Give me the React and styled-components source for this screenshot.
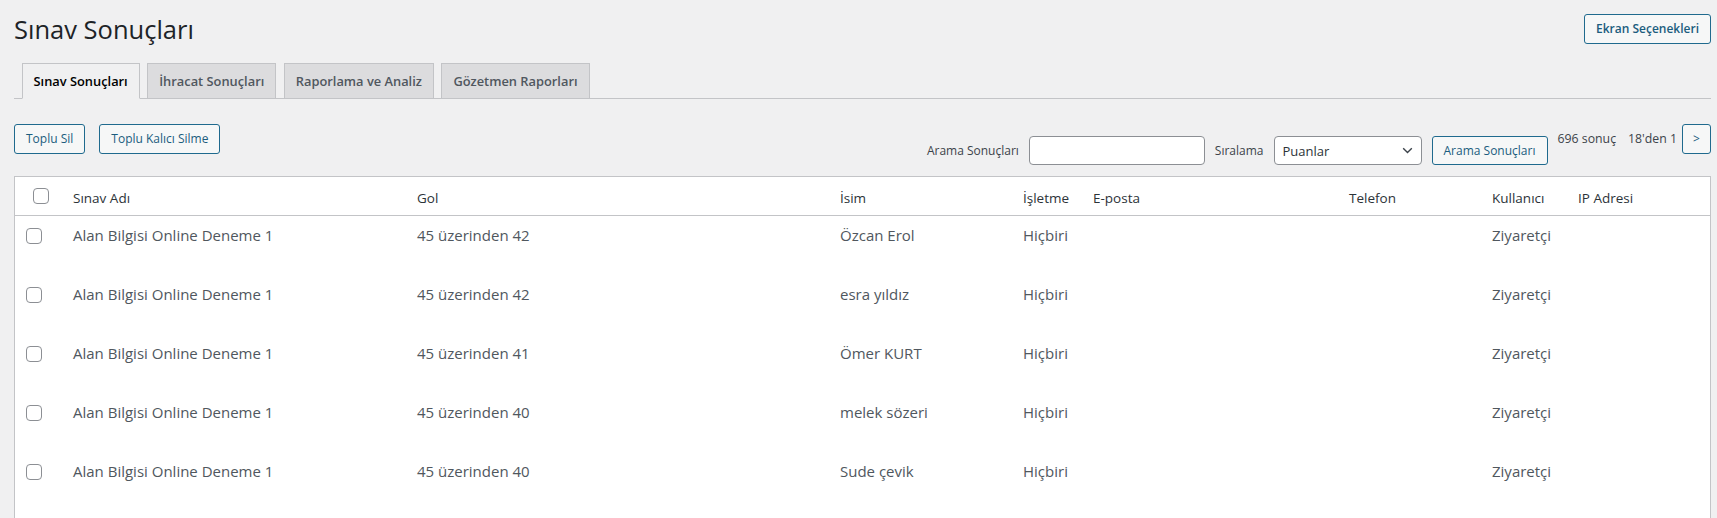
import React from 'react'
import styled, { createGlobalStyle } from 'styled-components'

const GlobalStyle = createGlobalStyle`
  * { box-sizing: border-box; }
  html, body {
    margin: 0;
    padding: 0;
    background: #f0f0f1;
    overflow: hidden;
  }
  body {
    font-family: "Open Sans", "Noto Sans", sans-serif;
    color: #3c434a;
  }
`

const Wrap = styled.div`
  padding: 13px 6px 0 14px;
`

const Header = styled.div`
  display: flex;
  justify-content: space-between;
  align-items: flex-start;
`

const Title = styled.h1`
  margin: 0;
  font-size: 25.5px;
  font-weight: 400;
  line-height: 32px;
  color: #1d2327;
`

const Button = styled.button`
  font-family: inherit;
  font-size: 12px;
  font-weight: ${props => props.$strong ? 600 : 400};
  color: #1b5d7e;
  background: #f6f7f7;
  border: 1px solid #1f6a8e;
  border-radius: 3px;
  height: ${props => props.$h || 30}px;
  width: ${props => props.$w ? props.$w + 'px' : 'auto'};
  margin-top: ${props => props.$mt || 0}px;
  padding: 0 11px;
  line-height: 1;
  white-space: nowrap;
  cursor: pointer;
`

const TabBar = styled.nav`
  display: flex;
  align-items: flex-end;
  padding-top: 18px;
  border-bottom: 1px solid #c3c4c7;
`

const Tab = styled.a`
  margin-left: 7.5px;
  padding: 5px 11px;
  font-size: 12.85px;
  font-weight: 600;
  line-height: 24px;
  border: 1px solid #c3c4c7;
  border-bottom: ${props => props.$active ? '1px solid #f0f0f1' : 'none'};
  margin-bottom: ${props => props.$active ? '-1px' : '0'};
  background: ${props => props.$active ? '#f0f0f1' : '#dcdcde'};
  color: ${props => props.$active ? '#000' : '#50575e'};
  white-space: nowrap;
  cursor: pointer;
`

const Toolbar = styled.div`
  display: flex;
  justify-content: space-between;
  align-items: flex-start;
  margin: 25px 0 11px;
`

const BulkActions = styled.div`
  display: flex;
  gap: 14px;
`

const RightTools = styled.div`
  display: flex;
  align-items: flex-start;
`

const SearchForm = styled.div`
  display: flex;
  align-items: center;
  gap: 10px;
  margin-top: 12px;
`

const Label = styled.span`
  font-size: 12px;
  color: #3c434a;
`

const Input = styled.input`
  width: 176px;
  height: 29px;
  border: 1px solid #8c8f94;
  border-radius: 4px;
  background: #fff;
  font-family: inherit;
`

const SelectBox = styled.div`
  width: 148px;
  height: 29px;
  display: flex;
  align-items: center;
  justify-content: space-between;
  padding: 0 8px 0 8px;
  border: 1px solid #8c8f94;
  border-radius: 4px;
  background: #fff;
  font-size: 13px;
  color: #2c3338;
`

const Pagination = styled.div`
  display: flex;
  align-items: flex-start;
  gap: 5px;
  margin-left: 10px;
`

const PageText = styled.span`
  display: flex;
  gap: 12px;
  font-size: 12.3px;
  line-height: 29px;
  color: #3c434a;
`

const Table = styled.table`
  width: 100%;
  table-layout: fixed;
  border-collapse: separate;
  border-spacing: 0;
  background: #fff;
  border: 1px solid #c3c4c7;
`

const Th = styled.th`
  text-align: left;
  font-weight: 400;
  font-size: 13.5px;
  line-height: 20px;
  color: #2c3338;
  padding: ${props => props.$check ? '11px 0 0 18px' : '11px 11px 7px'};
  border-bottom: 1px solid #c3c4c7;
  vertical-align: top;
  white-space: nowrap;
`

const Row = styled.tr`
  height: ${props => props.$h || 59}px;
`

const Td = styled.td`
  font-size: 15px;
  line-height: 22px;
  color: #50575e;
  padding: ${props => props.$check ? '12px 0 0 11px' : '8px 11px'};
  vertical-align: top;
  white-space: nowrap;
  overflow: hidden;
`

const Checkbox = styled.input`
  appearance: none;
  display: block;
  margin: 0;
  width: 16px;
  height: 16px;
  border: 1px solid #8c8f94;
  border-radius: 4px;
  background: #fff;
`

const columns = [
  { title: 'Sınav Adı', width: 344 },
  { title: 'Gol', width: 423 },
  { title: 'İsim', width: 183 },
  { title: 'İşletme', width: 70 },
  { title: 'E-posta', width: 256 },
  { title: 'Telefon', width: 143 },
  { title: 'Kullanıcı', width: 86 },
  { title: 'IP Adresi' },
]

const results = [
  { score: '45 üzerinden 42', name: 'Özcan Erol' },
  { score: '45 üzerinden 42', name: 'esra yıldız' },
  { score: '45 üzerinden 41', name: 'Ömer KURT' },
  { score: '45 üzerinden 40', name: 'melek sözeri' },
  { score: '45 üzerinden 40', name: 'Sude çevik' },
]

function Chevron() {
  return (
    <svg width="11" height="7" viewBox="0 0 11 7">
      <polyline points="1.2,1.2 5.5,5.5 9.8,1.2" fill="none" stroke="#3c434a" strokeWidth="1.4" />
    </svg>
  )
}

export default function App() {
  return (
    <Wrap>
      <GlobalStyle />
      <Header>
        <Title>Sınav Sonuçları</Title>
        <Button $strong $mt={1}>Ekran Seçenekleri</Button>
      </Header>

      <TabBar>
        <Tab $active>Sınav Sonuçları</Tab>
        <Tab>İhracat Sonuçları</Tab>
        <Tab>Raporlama ve Analiz</Tab>
        <Tab>Gözetmen Raporları</Tab>
      </TabBar>

      <Toolbar>
        <BulkActions>
          <Button>Toplu Sil</Button>
          <Button>Toplu Kalıcı Silme</Button>
        </BulkActions>
        <RightTools>
          <SearchForm>
            <Label>Arama Sonuçları</Label>
            <Input type="text" />
            <Label>Sıralama</Label>
            <SelectBox>
              <span>Puanlar</span>
              <Chevron />
            </SelectBox>
            <Button $h={29} $w={116}>Arama Sonuçları</Button>
          </SearchForm>
          <Pagination>
            <PageText>
              <span>696 sonuç</span>
              <span>18'den 1</span>
            </PageText>
            <Button $w={29} style={{ padding: 0 }}>&gt;</Button>
          </Pagination>
        </RightTools>
      </Toolbar>

      <Table>
        <colgroup>
          <col style={{ width: 47 }} />
          {columns.map(c => (
            <col key={c.title} style={c.width ? { width: c.width } : undefined} />
          ))}
        </colgroup>
        <thead>
          <tr>
            <Th $check><Checkbox type="checkbox" /></Th>
            {columns.map(c => <Th key={c.title}>{c.title}</Th>)}
          </tr>
        </thead>
        <tbody>
          {results.map((r, i) => (
            <Row key={i}>
              <Td $check><Checkbox type="checkbox" /></Td>
              <Td>Alan Bilgisi Online Deneme 1</Td>
              <Td>{r.score}</Td>
              <Td>{r.name}</Td>
              <Td>Hiçbiri</Td>
              <Td></Td>
              <Td></Td>
              <Td>Ziyaretçi</Td>
              <Td></Td>
            </Row>
          ))}
          <Row $h={40}>
            <Td colSpan={9}></Td>
          </Row>
        </tbody>
      </Table>
    </Wrap>
  )
}
